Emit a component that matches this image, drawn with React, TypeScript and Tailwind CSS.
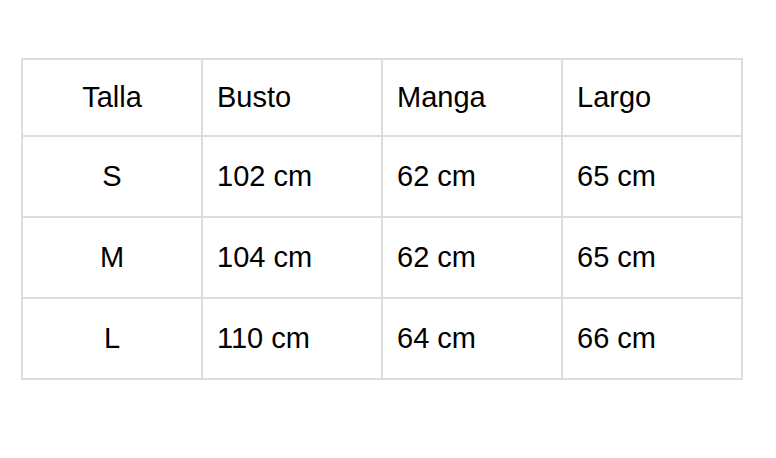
const ROWS = [
  ["S", "102 cm", "62 cm", "65 cm"],
  ["M", "104 cm", "62 cm", "65 cm"],
  ["L", "110 cm", "64 cm", "66 cm"],
];

const HEAD = ["Talla", "Busto", "Manga", "Largo"];

export default function App() {
  return (
    <div className="w-[776px] h-[458px] bg-white pt-[58px] pl-[21px] font-['Liberation_Sans',Arial,sans-serif] text-[29px] text-black">
      <table className="border-collapse table-fixed w-[722px]">
        <thead>
          <tr className="h-[77px]">
            {HEAD.map((h, i) => (
              <th
                key={h}
                className={`border-2 border-[#dddddd] w-[180px] font-normal ${
                  i === 0 ? "text-center" : "text-left pl-[14px]"
                }`}
              >
                {h}
              </th>
            ))}
          </tr>
        </thead>
        <tbody>
          {ROWS.map((row) => (
            <tr key={row[0]} className="h-[81px]">
              {row.map((c, i) => (
                <td
                  key={i}
                  className={`border-2 border-[#dddddd] ${
                    i === 0 ? "text-center" : "text-left pl-[14px]"
                  }`}
                >
                  {c}
                </td>
              ))}
            </tr>
          ))}
        </tbody>
      </table>
    </div>
  );
}
